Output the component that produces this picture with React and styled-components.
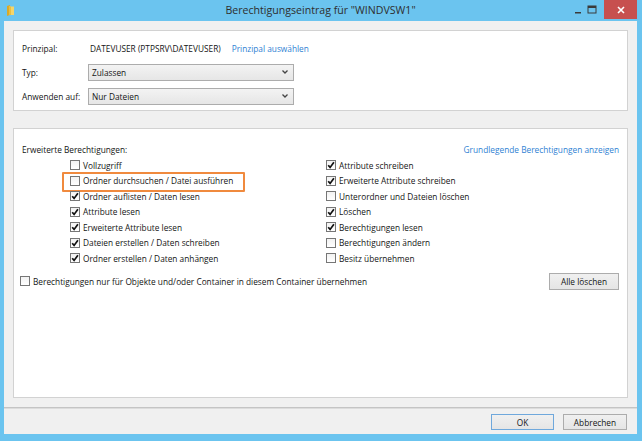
import React from 'react';
import styled, { createGlobalStyle } from 'styled-components';

const GlobalStyle = createGlobalStyle`
  html, body { margin: 0; padding: 0; }
  body {
    background: #ffffff;
    font-family: "Open Sans", "Noto Sans", sans-serif;
  }
`;

const Window = styled.div`
  width: 642px;
  height: 441px;
  box-sizing: border-box;
  background: #6bc4ef;
  padding: 0 5px 7px 4px;
  display: flex;
  flex-direction: column;
`;

const TitleBar = styled.div`
  height: 21px;
  display: grid;
  grid-template-columns: 1fr auto 1fr;
  align-items: start;
`;

const TitleText = styled.div`
  font-size: 10.6px;
  color: #2e2e2e;
  line-height: 21px;
`;

const AppIcon = styled.div`
  padding: 5px 0 0 2px;
  line-height: 0;
`;

const Controls = styled.div`
  justify-self: end;
  display: flex;
  align-items: flex-start;
`;

const CtrlBtn = styled.div`
  width: ${(p) => p.w}px;
  height: 19px;
  display: flex;
  align-items: center;
  justify-content: center;
  background: ${(p) => (p.close ? '#c7504f' : 'transparent')};
`;

const Client = styled.div`
  flex: 1;
  background: #f0f0f0;
  display: flex;
  flex-direction: column;
`;

const Body = styled.div`
  padding: 9px 9px 0 9px;
  display: flex;
  flex-direction: column;
`;

const Panel = styled.div`
  background: #ffffff;
  border: 1px solid #d2d2d2;
  box-sizing: border-box;
  height: ${(p) => p.h}px;
  margin-top: ${(p) => p.mt || 0}px;
  display: flex;
  flex-direction: column;
  font-size: 8.3px;
  color: #141414;
`;

const TopFields = styled.div`
  padding: 5px 0 0 8px;
`;

const FieldRow = styled.div`
  height: 24px;
  display: flex;
  align-items: center;
`;

const FieldLabel = styled.div`
  width: 66px;
`;

const FieldValue = styled.div`
  padding-left: 2px;
`;

const Link = styled.span`
  color: #2f7fd3;
  margin-left: ${(p) => p.ml || 0}px;
  cursor: pointer;
`;

const Select = styled.div`
  width: 206px;
  height: 17px;
  box-sizing: border-box;
  border: 1px solid #acacac;
  background: linear-gradient(#f3f3f3, #e6e6e6);
  display: flex;
  align-items: center;
  justify-content: space-between;
  padding: 0 5px 0 3px;
`;

const HeadRow = styled.div`
  height: 16px;
  display: flex;
  align-items: center;
  justify-content: space-between;
  padding: 0 8px 0 8px;
  margin-top: 12px;
`;

const PermGrid = styled.div`
  display: grid;
  grid-template-columns: 256px 1fr;
  grid-auto-flow: column;
  grid-template-rows: repeat(7, 15.5px);
  padding-left: 56px;
  margin-top: 0.5px;
`;

const CheckItem = styled.div`
  position: relative;
  display: flex;
  align-items: center;
  gap: 3px;
  white-space: nowrap;
`;

const Box = styled.span`
  width: 10px;
  height: 10px;
  box-sizing: border-box;
  border: 1px solid #767676;
  background: linear-gradient(#f2f2f2, #ffffff);
  display: inline-flex;
  align-items: center;
  justify-content: center;
  flex: none;
`;

const Highlight = styled.span`
  position: absolute;
  left: -8px;
  top: -1.5px;
  width: 183px;
  height: 20px;
  box-sizing: border-box;
  border: 2px solid #f08a3e;
  border-radius: 1px;
  pointer-events: none;
`;

const BottomRow = styled.div`
  display: flex;
  align-items: center;
  justify-content: space-between;
  padding: 0 8px 0 6px;
  margin-top: 6.5px;
`;

const Button = styled.div`
  width: ${(p) => p.w}px;
  height: ${(p) => p.h || 17}px;
  box-sizing: border-box;
  border: 1px solid ${(p) => (p.primary ? '#6fa8dc' : '#acacac')};
  background: linear-gradient(#f0f0f0, #e5e5e5);
  display: flex;
  align-items: center;
  justify-content: center;
  font-size: 8.3px;
  color: #141414;
`;

const Footer = styled.div`
  margin-top: 9px;
  border-top: 1px solid #c4c4c4;
  box-shadow: inset 0 1px 0 #dcdcdc;
  flex: 1;
  display: flex;
  justify-content: flex-end;
  gap: 9px;
  padding: 6px 10px 0 0;
`;

const Check = ({ checked, children, highlight }) => (
  <CheckItem>
    {highlight && <Highlight />}
    <Box>
      {checked && (
        <svg width="8" height="8" viewBox="0 0 8 8">
          <path d="M1.2 4.2 L3.1 6.4 L6.9 1.2" fill="none" stroke="#111" strokeWidth="1.7" />
        </svg>
      )}
    </Box>
    <span>{children}</span>
  </CheckItem>
);

const Chevron = () => (
  <svg width="6" height="4" viewBox="0 0 6 4">
    <path d="M0.5 0.5 L3 3 L5.5 0.5" fill="none" stroke="#444" strokeWidth="1.3" />
  </svg>
);

const leftPerms = [
  ['Vollzugriff', false],
  ['Ordner durchsuchen / Datei ausführen', false, true],
  ['Ordner auflisten / Daten lesen', true],
  ['Attribute lesen', true],
  ['Erweiterte Attribute lesen', true],
  ['Dateien erstellen / Daten schreiben', true],
  ['Ordner erstellen / Daten anhängen', true],
];

const rightPerms = [
  ['Attribute schreiben', true],
  ['Erweiterte Attribute schreiben', true],
  ['Unterordner und Dateien löschen', false],
  ['Löschen', true],
  ['Berechtigungen lesen', true],
  ['Berechtigungen ändern', false],
  ['Besitz übernehmen', false],
];

export default function App() {
  return (
    <>
      <GlobalStyle />
      <Window>
        <TitleBar>
          <AppIcon>
            <svg width="9" height="11" viewBox="0 0 9 11">
              <path d="M1 1 L4 0 L4 10 L1 11 Z" fill="#d9a92a" />
              <path d="M3 1.5 L8 1.5 L8 10 L3 10 Z" fill="#f5d56a" />
              <path d="M3 1.5 L5 1.5 L5 10 L3 10 Z" fill="#e8bf45" />
            </svg>
          </AppIcon>
          <TitleText>Berechtigungseintrag für "WINDVSW1"</TitleText>
          <Controls>
            <CtrlBtn w={15}>
              <svg width="8" height="8" viewBox="0 0 8 8">
                <rect x="1" y="6" width="6" height="1.5" fill="#3a3a3a" />
              </svg>
            </CtrlBtn>
            <CtrlBtn w={14}>
              <svg width="10" height="9" viewBox="0 0 10 9">
                <rect x="1" y="1" width="8" height="7" fill="none" stroke="#3a3a3a" strokeWidth="1" />
                <rect x="1" y="1" width="8" height="2" fill="#3a3a3a" />
              </svg>
            </CtrlBtn>
            <span style={{ width: 5 }} />
            <CtrlBtn w={33} close>
              <svg width="8" height="8" viewBox="0 0 8 8">
                <path d="M1 1 L7 7 M7 1 L1 7" stroke="#ffffff" strokeWidth="1.6" />
              </svg>
            </CtrlBtn>
          </Controls>
        </TitleBar>
        <Client>
          <Body>
            <Panel h={81}>
              <TopFields>
                <FieldRow>
                  <FieldLabel>Prinzipal:</FieldLabel>
                  <FieldValue>DATEVUSER (PTPSRV\DATEVUSER)</FieldValue>
                  <Link ml={11}>Prinzipal auswählen</Link>
                </FieldRow>
                <FieldRow>
                  <FieldLabel>Typ:</FieldLabel>
                  <Select>
                    <span>Zulassen</span>
                    <Chevron />
                  </Select>
                </FieldRow>
                <FieldRow>
                  <FieldLabel>Anwenden auf:</FieldLabel>
                  <Select>
                    <span>Nur Dateien</span>
                    <Chevron />
                  </Select>
                </FieldRow>
              </TopFields>
            </Panel>
            <Panel h={270} mt={17}>
              <HeadRow>
                <span>Erweiterte Berechtigungen:</span>
                <Link>Grundlegende Berechtigungen anzeigen</Link>
              </HeadRow>
              <PermGrid>
                {leftPerms.map(([label, checked, hl]) => (
                  <Check key={label} checked={checked} highlight={hl}>
                    {label}
                  </Check>
                ))}
                {rightPerms.map(([label, checked]) => (
                  <Check key={label} checked={checked}>
                    {label}
                  </Check>
                ))}
              </PermGrid>
              <BottomRow>
                <Check>Berechtigungen nur für Objekte und/oder Container in diesem Container übernehmen</Check>
                <Button w={70}>Alle löschen</Button>
              </BottomRow>
            </Panel>
          </Body>
          <Footer>
            <Button w={63} h={16} primary>OK</Button>
            <Button w={64} h={16}>Abbrechen</Button>
          </Footer>
        </Client>
      </Window>
    </>
  );
}
